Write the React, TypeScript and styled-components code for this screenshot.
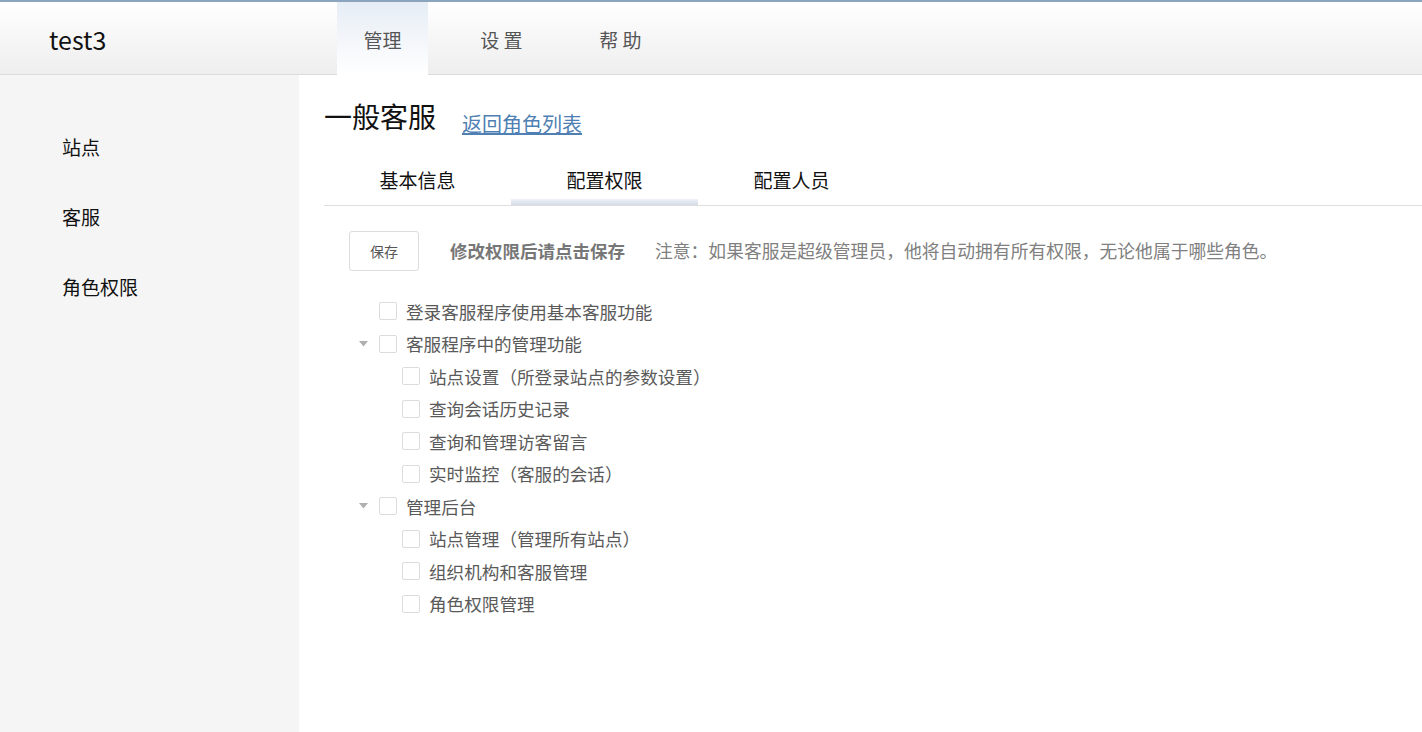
import React from "react";
import styled, { createGlobalStyle, css } from "styled-components";

const GlobalStyle = createGlobalStyle`
  html, body {
    margin: 0;
    padding: 0;
    background: #fff;
  }
  body {
    font-family: "Noto Sans CJK SC", "Microsoft YaHei", "Noto Sans", sans-serif;
    color: #222;
  }
  * {
    box-sizing: border-box;
  }
`;

const Page = styled.div`
  min-height: 100vh;
  display: flex;
  flex-direction: column;
`;

const TopBar = styled.header`
  height: 75px;
  border-top: 2px solid #8ca5bf;
  border-bottom: 1px solid #dcdcdc;
  background: linear-gradient(#ffffff, #eeeeee);
  display: flex;
  align-items: stretch;
`;

const Brand = styled.div`
  width: 337px;
  padding-left: 49px;
  padding-top: 1px;
  display: flex;
  align-items: center;
  font-size: 25px;
  color: #111;
`;

const NavList = styled.nav`
  display: flex;
  gap: 28px;
`;

const NavItem = styled.a<{ $active?: boolean }>`
  width: 91px;
  margin-bottom: -1px;
  padding-top: 2px;
  display: flex;
  align-items: center;
  justify-content: center;
  font-size: 19px;
  color: #555;
  white-space: pre;
  cursor: pointer;
  ${(p) =>
    p.$active &&
    css`
      background: linear-gradient(#e6edf5, #ffffff);
    `}
`;

const Body = styled.div`
  flex: 1;
  display: flex;
`;

const Sidebar = styled.aside`
  width: 299px;
  background: #f5f5f5;
  padding-top: 37px;
`;

const SideItem = styled.div`
  height: 70px;
  line-height: 70px;
  padding-left: 62px;
  font-size: 19px;
  color: #111;
`;

const Main = styled.main`
  flex: 1;
  padding-left: 25px;
`;

const TitleRow = styled.div`
  margin-top: 21px;
  display: flex;
  align-items: flex-start;
  gap: 26px;
`;

const Title = styled.h1`
  margin: 0;
  font-size: 28px;
  line-height: 40px;
  font-weight: 400;
  color: #111;
`;

const BackLink = styled.a`
  margin-top: 14px;
  font-size: 20px;
  line-height: 28px;
  color: #4f7fb3;
  text-decoration: underline;
  cursor: pointer;
`;

const TabBar = styled.div`
  margin-top: 19px;
  display: flex;
  border-bottom: 1px solid #dedede;
`;

const Tab = styled.div<{ $active?: boolean }>`
  width: 187px;
  height: 48px;
  line-height: 46px;
  text-align: center;
  font-size: 19px;
  color: #111;
  ${(p) =>
    p.$active &&
    css`
      background: linear-gradient(#eef2f7, #d4dce8) no-repeat bottom / 100% 6px;
    `}
`;

const Toolbar = styled.div`
  margin-top: 25px;
  padding-left: 25px;
  display: flex;
  align-items: center;
`;

const SaveButton = styled.button`
  width: 70px;
  height: 40px;
  border: 1px solid #dcdcdc;
  border-radius: 3px;
  background: #fff;
  font-family: inherit;
  font-size: 14px;
  color: #555;
  cursor: pointer;
`;

const Hint = styled.span`
  margin-left: 31px;
  margin-top: -2px;
  font-size: 17.5px;
  font-weight: 700;
  color: #777;
`;

const Note = styled.span`
  margin-left: 30px;
  margin-top: -2px;
  font-size: 17.8px;
  color: #808080;
`;

const Tree = styled.ul`
  list-style: none;
  margin: 24px 0 0;
  padding: 0 0 0 31px;
`;

const Row = styled.li<{ $level: number }>`
  height: 32.5px;
  display: flex;
  align-items: center;
  padding-left: ${(p) => p.$level * 23}px;
  font-size: 17.6px;
  color: #5a5a5a;
`;

const CaretSlot = styled.span`
  width: 24px;
  display: flex;
  align-items: center;
  padding-left: 4px;
`;

const Box = styled.span`
  width: 18px;
  height: 18px;
  border: 1px solid #dcdcdc;
  border-radius: 2px;
  background: #fff;
  margin-right: 9px;
`;

const Caret = () => (
  <svg width="9" height="6" viewBox="0 0 9 6">
    <path d="M0 0 L9 0 L4.5 5.5 Z" fill="#b0b0b0" />
  </svg>
);

type Perm = { label: string; level: number; parent?: boolean };

const perms: Perm[] = [
  { label: "登录客服程序使用基本客服功能", level: 0 },
  { label: "客服程序中的管理功能", level: 0, parent: true },
  { label: "站点设置（所登录站点的参数设置）", level: 1 },
  { label: "查询会话历史记录", level: 1 },
  { label: "查询和管理访客留言", level: 1 },
  { label: "实时监控（客服的会话）", level: 1 },
  { label: "管理后台", level: 0, parent: true },
  { label: "站点管理（管理所有站点）", level: 1 },
  { label: "组织机构和客服管理", level: 1 },
  { label: "角色权限管理", level: 1 },
];

export default function App() {
  return (
    <Page>
      <GlobalStyle />
      <TopBar>
        <Brand>test3</Brand>
        <NavList>
          <NavItem $active>管理</NavItem>
          <NavItem>设 置</NavItem>
          <NavItem>帮 助</NavItem>
        </NavList>
      </TopBar>
      <Body>
        <Sidebar>
          <SideItem>站点</SideItem>
          <SideItem>客服</SideItem>
          <SideItem>角色权限</SideItem>
        </Sidebar>
        <Main>
          <TitleRow>
            <Title>一般客服</Title>
            <BackLink>返回角色列表</BackLink>
          </TitleRow>
          <TabBar>
            <Tab>基本信息</Tab>
            <Tab $active>配置权限</Tab>
            <Tab>配置人员</Tab>
          </TabBar>
          <Toolbar>
            <SaveButton>保存</SaveButton>
            <Hint>修改权限后请点击保存</Hint>
            <Note>注意：如果客服是超级管理员，他将自动拥有所有权限，无论他属于哪些角色。</Note>
          </Toolbar>
          <Tree>
            {perms.map((p) => (
              <Row key={p.label} $level={p.level}>
                <CaretSlot>{p.parent && <Caret />}</CaretSlot>
                <Box />
                {p.label}
              </Row>
            ))}
          </Tree>
        </Main>
      </Body>
    </Page>
  );
}
